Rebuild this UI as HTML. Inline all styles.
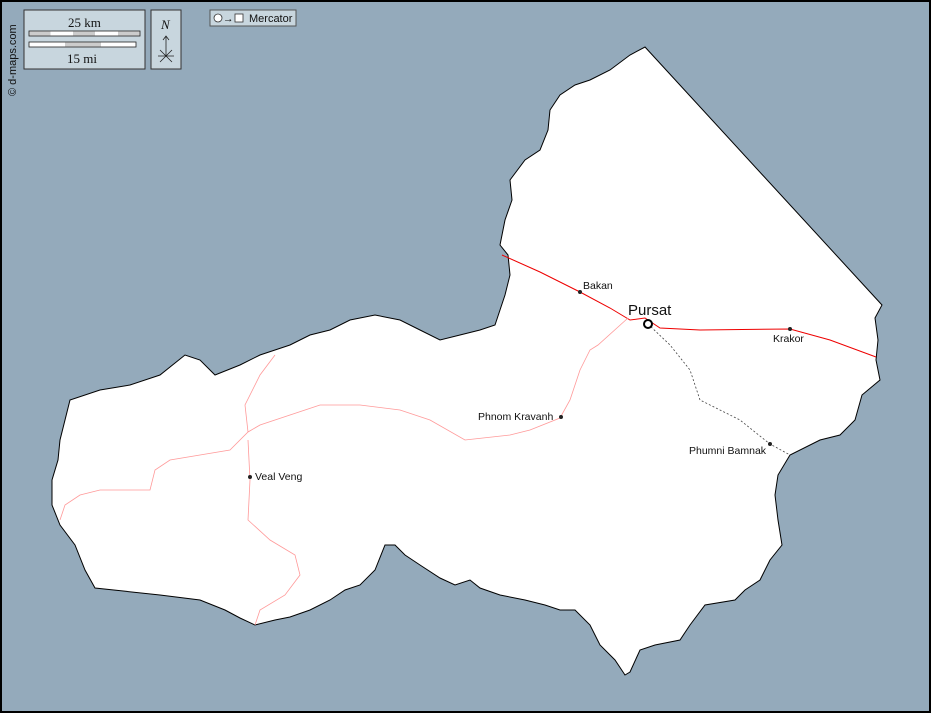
<!DOCTYPE html>
<html><head><style>
body{margin:0;width:931px;height:713px;overflow:hidden;background:#000;}
svg{display:block}
text{font-family:"Liberation Sans",sans-serif;font-size:10.5px;fill:#111}
</style></head><body>
<svg width="931" height="713" viewBox="0 0 931 713">
<rect x="1" y="1" width="929" height="711" fill="#94aabb" stroke="#000" stroke-width="2"/>
<path fill="#fff" stroke="#000" stroke-width="1" d="M645,47 L882,305 L875,318 L878,340 L876,360 L880,380 L862,395 L855,420 L840,435 L820,440 L790,455 L778,475 L775,495 L778,520 L782,545 L770,560 L760,580 L745,590 L735,600 L705,605 L690,625 L680,640 L655,645 L640,650 L630,672 L625,675 L615,660 L600,645 L590,625 L575,610 L560,610 L545,605 L525,600 L500,595 L480,588 L470,580 L455,585 L440,578 L420,565 L405,555 L395,545 L385,545 L375,570 L360,585 L345,590 L330,600 L310,610 L290,617 L275,620 L255,625 L240,618 L225,610 L200,600 L160,595 L95,588 L85,570 L75,545 L60,525 L52,505 L52,480 L58,460 L60,440 L65,420 L70,400 L100,390 L130,385 L160,375 L185,355 L200,360 L215,375 L240,365 L260,355 L290,345 L310,335 L330,330 L350,320 L375,315 L400,320 L420,330 L440,340 L460,335 L480,330 L495,325 L500,310 L505,295 L510,275 L508,255 L500,245 L505,220 L512,200 L510,180 L525,160 L540,150 L548,130 L550,110 L560,95 L575,85 L590,80 L610,70 L630,55 Z"/>
<path fill="none" stroke="#e00" stroke-width="1" d="M502,255 L540,272 L580,292 L610,308 L630,320 L645,318 L660,328 L700,330 L790,329 L830,340 L876,357"/>
<path fill="none" stroke="#f99" stroke-width="0.8" d="M628,318 L598,345 L590,350 L580,370 L570,400 L560,418 L530,430 L510,435 L465,440 L430,420 L400,410 L360,405 L320,405 L290,415 L260,425 L248,432 L230,450 L200,455 L170,460 L155,470 L150,490 L120,490 L100,490 L80,495 L65,505 L60,520 M248,432 L245,405 L260,375 L275,355 M248,440 L250,480 L248,520 L270,540 L295,555 L300,575 L285,595 L260,610 L255,625"/>
<path fill="none" stroke="#444" stroke-width="0.8" stroke-dasharray="2,2" d="M648,324 L670,345 L690,370 L700,400 L740,420 L770,444 L790,455"/>
<circle cx="648" cy="324" r="4" fill="#fff" stroke="#000" stroke-width="2"/>
<g fill="#222"><circle cx="580" cy="292" r="2"/><circle cx="790" cy="329" r="2"/><circle cx="561" cy="417" r="2"/><circle cx="770" cy="444" r="2"/><circle cx="250" cy="477" r="2"/></g>
<text x="628" y="315" style="font-size:15px">Pursat</text>
<text x="583" y="289">Bakan</text>
<text x="773" y="342">Krakor</text>
<text x="478" y="420">Phnom Kravanh</text>
<text x="689" y="454">Phumni Bamnak</text>
<text x="255" y="480">Veal Veng</text>
<rect x="24" y="10" width="121" height="59" fill="#c8d6de" stroke="#333"/>
<text x="68" y="27" style="font-family:'Liberation Serif',serif;font-size:13px">25 km</text>
<rect x="29" y="31" width="111" height="5" fill="#fff" stroke="#222" stroke-width="0.8"/>
<g fill="#ccc"><rect x="29.5" y="31.5" width="21" height="4"/><rect x="73" y="31.5" width="22" height="4"/><rect x="118" y="31.5" width="21.5" height="4"/></g>
<rect x="29" y="42" width="107" height="5" fill="#fff" stroke="#222" stroke-width="0.8"/>
<rect x="65" y="42.5" width="36" height="4" fill="#ccc"/>
<text x="67" y="63" style="font-family:'Liberation Serif',serif;font-size:13px">15 mi</text>
<rect x="151" y="10" width="30" height="59" fill="#c8d6de" stroke="#333"/>
<text x="161" y="29" style="font-family:'Liberation Serif',serif;font-size:13px;font-style:italic">N</text>
<path d="M166,56 L166,36 M163,40 L166,36 L169,40 M158,56 L174,56 M160,50 L172,62 M172,50 L160,62" stroke="#222" stroke-width="0.8" fill="none"/>
<rect x="210" y="10" width="86" height="16" fill="#c8d6de" stroke="#555"/>
<circle cx="218" cy="18" r="4" fill="#fff" stroke="#333" stroke-width="0.8"/>
<text x="223" y="22">→</text>
<rect x="235" y="14" width="8" height="8" fill="#fff" stroke="#333" stroke-width="0.8"/>
<text x="249" y="22" style="font-size:11px">Mercator</text>
<text transform="translate(16,96) rotate(-90)" style="font-size:11px">© d-maps.com</text>
</svg>
</body></html>
